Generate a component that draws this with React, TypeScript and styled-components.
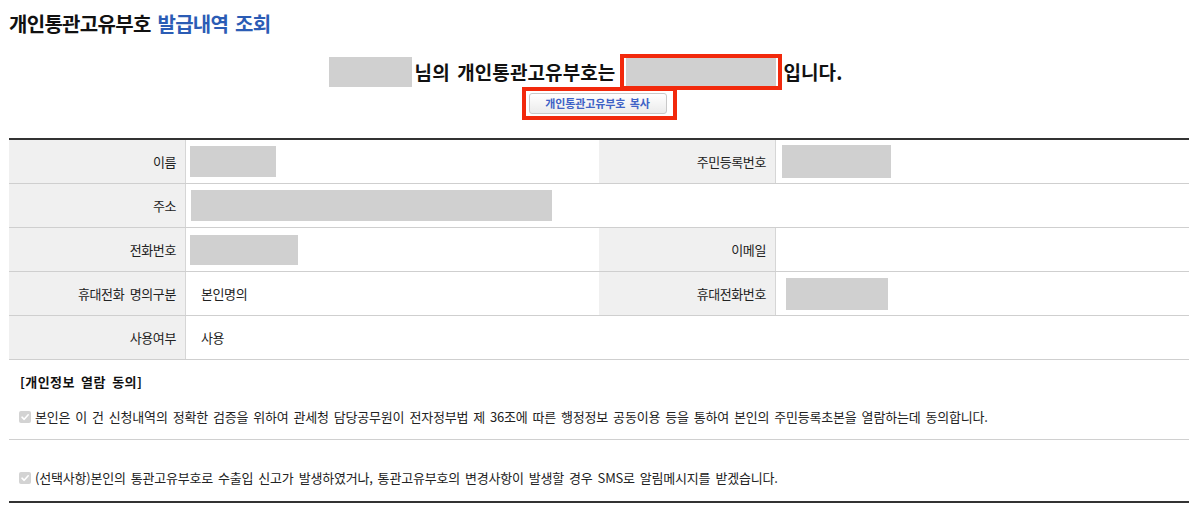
import React from "react";
import styled, { createGlobalStyle } from "styled-components";

const Global = createGlobalStyle`
  html, body { margin: 0; padding: 0; background: #fff; }
  body {
    font-family: "Noto Sans CJK KR", "Noto Sans", sans-serif;
    color: #222;
  }
  * { box-sizing: border-box; }
`;

const Page = styled.div`
  width: 1198px;
  padding: 0 9px;
`;

const Title = styled.h1`
  margin: 0;
  padding-top: 10px;
  font-size: 20px;
  line-height: 28px;
  font-weight: 700;
  letter-spacing: -0.7px;
  word-spacing: 3px;
  color: #111;
`;

const TitleAccent = styled.span`
  color: #2b5cb5;
`;

const NameLine = styled.div`
  margin-top: 16px;
  height: 36px;
  display: flex;
  align-items: center;
  justify-content: center;
  padding-right: 27px;
`;

const Redact = styled.span<{ $w: number; $h: number; $dx?: number }>`
  display: block;
  flex: none;
  width: ${(p) => p.$w}px;
  height: ${(p) => p.$h}px;
  margin-left: ${(p) => p.$dx ?? 0}px;
  background: #d0d0d0;
`;

const BigText = styled.span<{ $ml?: number }>`
  font-size: 19px;
  font-weight: 700;
  letter-spacing: 0.1px;
  word-spacing: 3px;
  line-height: 24px;
  color: #111;
  margin-left: ${(p) => p.$ml ?? 0}px;
  white-space: pre;
`;

const RedFrame = styled.div<{ $pad: string; $ml?: number }>`
  display: flex;
  align-items: center;
  border: 4px solid #f2290c;
  padding: ${(p) => p.$pad};
  margin-left: ${(p) => p.$ml ?? 0}px;
`;

const CopyRow = styled.div`
  display: flex;
  justify-content: center;
  margin-top: -3px;
`;

const CopyButton = styled.button`
  width: 138px;
  height: 21px;
  padding: 0;
  font-family: inherit;
  font-size: 11px;
  font-weight: 700;
  letter-spacing: -0.1px;
  word-spacing: 2px;
  color: #3f62c6;
  background: linear-gradient(#ffffff, #ebebeb);
  border: 1px solid #c9c9c9;
  border-radius: 3px;
  line-height: 19px;
`;

const InfoTable = styled.div`
  margin-top: 18px;
  border-top: 2px solid #333;
`;

const Row = styled.div`
  display: grid;
  grid-template-columns: 177px 413px 177px 413px;
  height: 44px;
  border-bottom: 1px solid #cfcfcf;
`;

const Label = styled.div`
  background: #f0f0f0;
  border-right: 1px solid #d6d6d6;
  display: flex;
  align-items: center;
  justify-content: flex-end;
  padding-right: 9px;
  font-size: 13px;
  letter-spacing: -0.4px;
  word-spacing: 3px;
  color: #222;
`;

const Value = styled.div<{ $span?: number }>`
  grid-column: span ${(p) => p.$span ?? 1};
  display: flex;
  align-items: center;
  padding-left: 15px;
  font-size: 13px;
  letter-spacing: -0.4px;
  color: #222;
`;

const Consent = styled.div`
  border-bottom: 2px solid #333;
`;

const ConsentHeading = styled.div`
  margin-top: 12px;
  padding-left: 11px;
  line-height: 20px;
  font-size: 13px;
  font-weight: 700;
  letter-spacing: 0.4px;
  word-spacing: 3px;
  color: #111;
`;

const ConsentItem = styled.div<{ $pt: number; $pb: number; $line?: boolean }>`
  display: flex;
  align-items: center;
  padding: ${(p) => p.$pt}px 0 ${(p) => p.$pb}px 10px;
  line-height: 20px;
  font-size: 13px;
  letter-spacing: -0.2px;
  word-spacing: 2.3px;
  color: #222;
  border-bottom: ${(p) => (p.$line ? "1px solid #d0d0d0" : "none")};
`;

const Check = styled.span`
  flex: none;
  width: 12px;
  height: 12px;
  margin-right: 4px;
  border-radius: 2px;
  background: #d3d3d3;
  display: flex;
  align-items: center;
  justify-content: center;
`;

const CheckMark = () => (
  <svg width="10" height="10" viewBox="0 0 10 10">
    <path d="M2 5.2 L4.2 7.3 L8.2 2.8" fill="none" stroke="#fff" strokeWidth="1.6" strokeLinecap="round" strokeLinejoin="round" />
  </svg>
);

export default function App() {
  return (
    <>
      <Global />
      <Page>
        <Title>
          개인통관고유부호 <TitleAccent>발급내역 조회</TitleAccent>
        </Title>

        <NameLine>
          <Redact $w={83} $h={30} />
          <BigText $ml={3}>님의 개인통관고유부호는</BigText>
          <RedFrame $pad="0 2px" $ml={5}>
            <Redact $w={150} $h={28} />
          </RedFrame>
          <BigText $ml={1}>입니다.</BigText>
        </NameLine>

        <CopyRow>
          <RedFrame $pad="2px 6px 2px 3px">
            <CopyButton type="button">개인통관고유부호 복사</CopyButton>
          </RedFrame>
        </CopyRow>

        <InfoTable>
          <Row>
            <Label>이름</Label>
            <Value>
              <Redact $w={86} $h={31} $dx={-11} />
            </Value>
            <Label>주민등록번호</Label>
            <Value>
              <Redact $w={109} $h={33} $dx={-9} />
            </Value>
          </Row>
          <Row>
            <Label>주소</Label>
            <Value $span={3}>
              <Redact $w={361} $h={31} $dx={-10} />
            </Value>
          </Row>
          <Row>
            <Label>전화번호</Label>
            <Value>
              <Redact $w={108} $h={30} $dx={-11} />
            </Value>
            <Label>이메일</Label>
            <Value />
          </Row>
          <Row>
            <Label>휴대전화 명의구분</Label>
            <Value>본인명의</Value>
            <Label>휴대전화번호</Label>
            <Value>
              <Redact $w={102} $h={32} $dx={-5} />
            </Value>
          </Row>
          <Row>
            <Label>사용여부</Label>
            <Value $span={3}>사용</Value>
          </Row>
        </InfoTable>

        <Consent>
          <ConsentHeading>[개인정보 열람 동의]</ConsentHeading>
          <ConsentItem $pt={15} $pb={12} $line>
            <Check>
              <CheckMark />
            </Check>
            본인은 이 건 신청내역의 정확한 검증을 위하여 관세청 담당공무원이 전자정부법 제 36조에 따른 행정정보 공동이용 등을 통하여 본인의 주민등록초본을 열람하는데 동의합니다.
          </ConsentItem>
          <ConsentItem $pt={28} $pb={13}>
            <Check>
              <CheckMark />
            </Check>
            (선택사항)본인의 통관고유부호로 수출입 신고가 발생하였거나, 통관고유부호의 변경사항이 발생할 경우 SMS로 알림메시지를 받겠습니다.
          </ConsentItem>
        </Consent>
      </Page>
    </>
  );
}
